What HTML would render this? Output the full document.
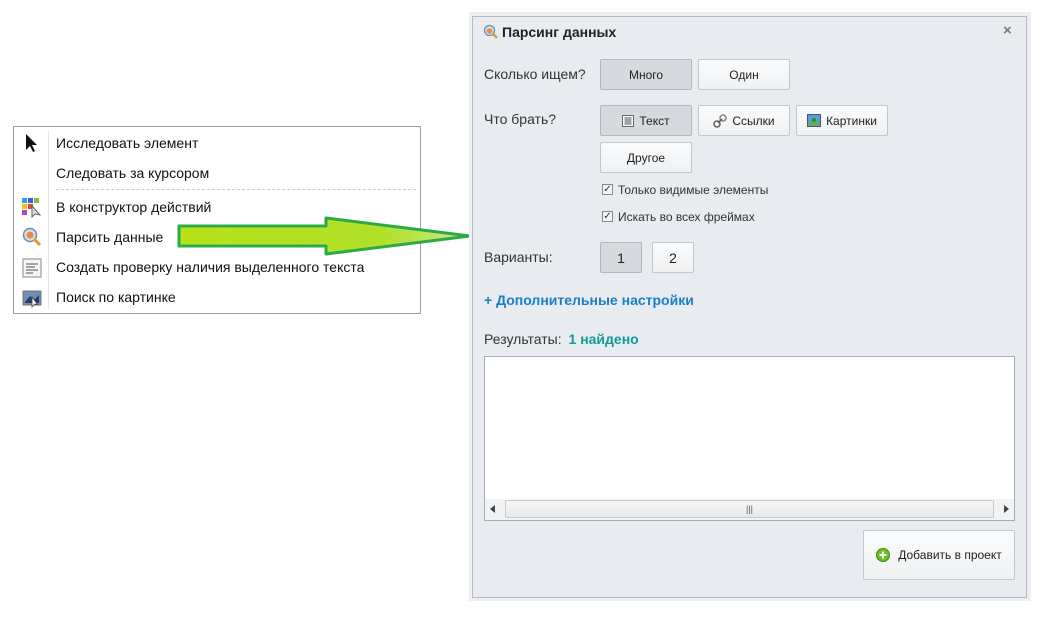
<!DOCTYPE html>
<html><head><meta charset="utf-8"><style>
*{box-sizing:border-box;margin:0;padding:0}
body{width:1051px;height:620px;background:#fff;position:relative;overflow:hidden;font-family:"Liberation Sans","DejaVu Sans",sans-serif;color:#222}
.a{position:absolute}
.menu{left:13px;top:126px;width:408px;height:188px;border:1px solid #a0a0a0;background:#fff}
.mi{position:absolute;left:42px;font-size:14px;color:#111;white-space:nowrap}
.frame{left:469px;top:12px;width:562px;height:589px;background:#edf0f3}
.panel{left:472px;top:16px;width:555px;height:582px;background:#e8ebef;border:1px solid #b4b9c0}
.lbl{position:absolute;font-size:14px;color:#333;white-space:nowrap}
.btn{position:absolute;height:31px;border:1px solid #c3c7cc;border-radius:2px;background:linear-gradient(#fafbfc,#eff1f3);font-size:12px;color:#222;display:flex;align-items:center;justify-content:center;gap:5px}
.btn.on{background:#d6dade;border-color:#b2b7bd}
.cb{position:absolute;width:11px;height:11px;border:1px solid #888;background:#f4f4f4;font-size:10px;line-height:9px;text-align:center;color:#333}
</style></head><body>
<div class="a menu">
 <div class="a" style="left:34px;top:4px;width:1px;height:178px;background:#e4e4e4"></div>
 <svg class="a" style="left:10px;top:6px" width="14" height="20"><path d="M2 1 L2 17 L6 13 L9 19 L11 18 L8 12 L13 12 Z" fill="#111"/></svg>
 <div class="mi" style="top:8px">Исследовать элемент</div>
 <div class="mi" style="top:38px">Следовать за курсором</div>
 <div class="a" style="left:42px;top:62px;width:360px;border-top:1px dashed #c8c8c8"></div>
 <svg class="a" style="left:8px;top:71px" width="20" height="20"><rect x="0" y="0" width="5" height="5" fill="#2aa3e8"/><rect x="6" y="0" width="5" height="5" fill="#3a5fd8"/><rect x="12" y="0" width="5" height="5" fill="#7bc142"/><rect x="0" y="6" width="5" height="5" fill="#f6c500"/><rect x="6" y="6" width="5" height="5" fill="#e84040"/><rect x="0" y="12" width="5" height="5" fill="#b43fd0"/><path d="M10 8 L10 19 L13 16 L18 17 Z" fill="#ddd" stroke="#666"/></svg>
 <div class="mi" style="top:72px">В конструктор действий</div>
 <svg class="a" style="left:8px;top:100px" width="20" height="20"><circle cx="8" cy="8" r="6.5" fill="#cfe2f3" stroke="#6a8fb0" stroke-width="1.5"/><circle cx="8" cy="8" r="3.5" fill="#f08a3c"/><path d="M12 12 L18 18" stroke="#d99a30" stroke-width="3"/></svg>
 <div class="mi" style="top:102px">Парсить данные</div>
 <svg class="a" style="left:8px;top:131px" width="20" height="20"><rect x="1" y="1" width="18" height="18" fill="#f4f4f4" stroke="#888"/><path d="M4 6h12M4 9h9M4 12h12M4 15h7" stroke="#555"/></svg>
 <div class="mi" style="top:132px">Создать проверку наличия выделенного текста</div>
 <svg class="a" style="left:8px;top:161px" width="20" height="20"><rect x="1" y="3" width="18" height="14" fill="#6f8fb5" stroke="#777"/><path d="M3 14 L8 8 L12 12 L17 7 L17 15 L3 15Z" fill="#2c3e60"/><path d="M10 9 L10 19 L13 16 L16 17Z" fill="#fff" stroke="#444" stroke-width=".8"/></svg>
 <div class="mi" style="top:162px">Поиск по картинке</div>
</div>
<svg class="a" style="left:170px;top:212px" width="305" height="48"><defs><linearGradient id="g" x1="0" x2="1"><stop offset="0" stop-color="#b7e21a"/><stop offset=".7" stop-color="#b0e02a"/><stop offset="1" stop-color="#c8e888"/></linearGradient></defs><path d="M9 14 L156 14 L156 6 L300 24 L156 42 L156 34 L9 34 Z" fill="url(#g)" stroke="#2eaa45" stroke-width="3" stroke-linejoin="round"/></svg>
<div class="a frame"></div>
<div class="a panel">
 <svg class="a" style="left:10px;top:7px" width="16" height="16"><circle cx="6.5" cy="6.5" r="5" fill="#cfe2f3" stroke="#6a8fb0" stroke-width="1.3"/><circle cx="6.5" cy="7" r="2.8" fill="#f08a3c"/><path d="M10 10 L14 14" stroke="#d99a30" stroke-width="2.5"/></svg>
 <div class="lbl" style="left:29px;top:7px;font-weight:bold;font-size:14px;color:#222">Парсинг данных</div>
 <div class="lbl" style="left:530px;top:5px;font-size:15px;color:#777;font-weight:bold">×</div>
 <div class="lbl" style="left:11px;top:49px">Сколько ищем?</div>
 <div class="btn on" style="left:127px;top:42px;width:92px">Много</div>
 <div class="btn" style="left:225px;top:42px;width:92px">Один</div>
 <div class="lbl" style="left:11px;top:94px">Что брать?</div>
 <div class="btn on" style="left:127px;top:88px;width:92px"><svg width="12" height="12"><rect x=".5" y=".5" width="11" height="11" fill="#fff" stroke="#666"/><path d="M2.5 3h7M2.5 5h7M2.5 7h7M2.5 9h7" stroke="#444"/></svg>Текст</div>
 <div class="btn" style="left:225px;top:88px;width:92px"><svg width="14" height="14"><circle cx="4" cy="10" r="3" fill="none" stroke="#666" stroke-width="1.6"/><circle cx="10" cy="4" r="3" fill="none" stroke="#888" stroke-width="1.6"/><path d="M5 9L9 5" stroke="#555" stroke-width="1.5"/></svg>Ссылки</div>
 <div class="btn" style="left:323px;top:88px;width:92px"><svg width="14" height="13"><rect x=".5" y=".5" width="13" height="12" fill="#4da3e0" stroke="#555"/><rect x="2" y="8" width="10" height="3" fill="#6bb030"/><circle cx="7" cy="6" r="2" fill="#3a8a20"/></svg>Картинки</div>
 <div class="btn" style="left:127px;top:125px;width:92px">Другое</div>
 <div class="cb" style="left:129px;top:167px">✓</div>
 <div class="lbl" style="left:145px;top:166px;font-size:12px">Только видимые элементы</div>
 <div class="cb" style="left:129px;top:194px">✓</div>
 <div class="lbl" style="left:145px;top:193px;font-size:12px">Искать во всех фреймах</div>
 <div class="lbl" style="left:11px;top:232px">Варианты:</div>
 <div class="btn on" style="left:127px;top:225px;width:42px;font-size:14px">1</div>
 <div class="btn" style="left:179px;top:225px;width:42px;font-size:14px">2</div>
 <div class="lbl" style="left:11px;top:275px;font-weight:bold;color:#1a7fc4">+ Дополнительные настройки</div>
 <div class="lbl" style="left:11px;top:314px">Результаты: <b style="color:#16999a;margin-left:3px">1 найдено</b></div>
 <div class="a" style="left:11px;top:339px;width:531px;height:165px;background:#fff;border:1px solid #a8acb2">
  <div class="a" style="left:0;bottom:0;width:529px;height:21px;background:#f2f3f5">
   <div class="a" style="left:5px;top:6px;width:0;height:0;border-top:4px solid transparent;border-bottom:4px solid transparent;border-right:5px solid #444"></div>
   <div class="a" style="left:20px;top:1px;width:489px;height:18px;border:1px solid #c6c9cd;border-radius:2px;background:linear-gradient(#f6f7f8,#e6e8ea);font-size:9px;color:#555;text-align:center;line-height:16px">|||</div>
   <div class="a" style="right:5px;top:6px;width:0;height:0;border-top:4px solid transparent;border-bottom:4px solid transparent;border-left:5px solid #444"></div>
  </div>
 </div>
 <div class="btn" style="left:390px;top:513px;width:152px;height:50px;font-size:12px;gap:8px"><svg width="14" height="14"><circle cx="7" cy="7" r="6.5" fill="#6cc020" stroke="#3e8a10"/><path d="M7 3.5v7M3.5 7h7" stroke="#fff" stroke-width="2"/></svg>Добавить в проект</div>
</div>
</body></html>
